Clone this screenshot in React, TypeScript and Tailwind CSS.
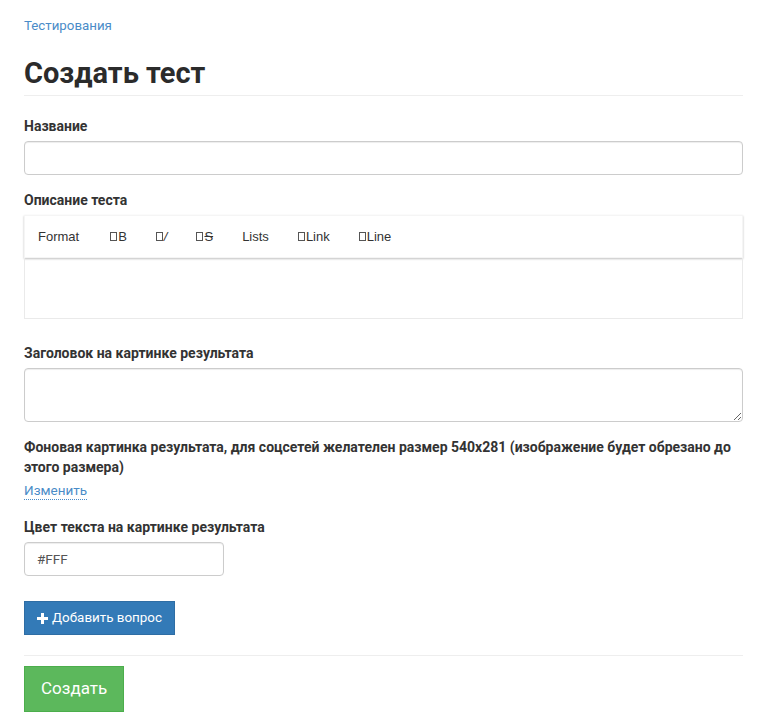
export default function App() {
  const tools = [
    { label: "Format" },
    { label: "B", box: true },
    { label: "/", box: true },
    { label: "S", box: true, strike: true },
    { label: "Lists" },
    { label: "Link", box: true },
    { label: "Line", box: true }
  ];

  return (
    <div className="min-h-screen bg-white px-6 pt-[13px] text-[#333] font-['Roboto',sans-serif]">
      <a href="#" className="text-[13.3px] text-[#4a8cc8]">
        Тестирования
      </a>

      <h1 className="mt-[18px] text-[29px] font-bold leading-[36px] text-[#2b2b2b]">Создать тест</h1>
      <hr className="mt-[4px] border-t border-[#eee]" />

      <label className="mt-[20px] block text-[14px] font-bold leading-[20px]">Название</label>
      <input className="mt-[5px] block h-[34px] w-full rounded-[4px] border border-[#ccc] px-3 shadow-[inset_0_1px_1px_rgba(0,0,0,0.075)]" />

      <label className="mt-[15px] block text-[14px] font-bold leading-[20px]">Описание теста</label>
      <div className="mt-[5px]">
        <div className="flex h-[43px] items-center gap-[1px] border border-[#f5f5f5] bg-white shadow-[0_1px_2px_rgba(0,0,0,0.25)] font-['Liberation_Sans',Arial,sans-serif] text-[13px] text-[#333]">
          {tools.map((t) => (
            <button
              key={t.label}
              type="button"
              className={`flex items-center px-[14px] first:pl-[13px] first:pr-[16px] ${t.strike ? "line-through" : ""}`}
            >
              {t.box ? (
                <span className="mr-[1px] inline-block h-[9px] w-[7px] border border-[#555]" />
              ) : null}
              <span className={t.label === "/" ? "italic" : ""}>{t.label}</span>
            </button>
          ))}
        </div>
        <div className="h-[61px] border border-t-0 border-[#eaeaea]" />
      </div>

      <label className="mt-[24px] block text-[14px] font-bold leading-[20px]">
        Заголовок на картинке результата
      </label>
      <textarea className="mt-[5px] block h-[54px] w-full rounded-[4px] border border-[#ccc] px-3 shadow-[inset_0_1px_1px_rgba(0,0,0,0.075)]" />

      <label className="mt-[15px] block text-[14px] font-bold leading-[20px]">
        Фоновая картинка результата, для соцсетей желателен размер 540x281 (изображение будет обрезано до этого размера)
      </label>
      <a
        href="#"
        className="mt-[5px] inline-block border-b border-dotted border-[#4a8cc8] text-[13.5px] leading-[17px] text-[#4a8cc8]"
      >
        Изменить
      </a>

      <label className="mt-[15px] block text-[14px] font-bold leading-[20px]">
        Цвет текста на картинке результата
      </label>
      <input
        defaultValue="#FFF"
        className="mt-[5px] block h-[34px] w-[200px] rounded-[4px] border border-[#ccc] px-3 text-[13.5px] text-[#555] shadow-[inset_0_1px_1px_rgba(0,0,0,0.075)]"
      />

      <button
        type="button"
        className="mt-[25px] flex h-[34px] items-center gap-[4px] border border-[#2e6da4] bg-[#337ab7] px-3 text-[13.4px] text-white"
      >
        <svg width="11" height="11" viewBox="0 0 11 11" fill="white">
          <rect x="4" y="0" width="3" height="11" />
          <rect x="0" y="4" width="11" height="3" />
        </svg>
        Добавить вопрос
      </button>

      <hr className="mt-[20px] border-t border-[#eee]" />

      <button
        type="button"
        className="mt-[10px] h-[46px] border border-[#4cae4c] bg-[#5cb85c] px-4 text-[17px] text-white"
      >
        Создать
      </button>
    </div>
  );
}
